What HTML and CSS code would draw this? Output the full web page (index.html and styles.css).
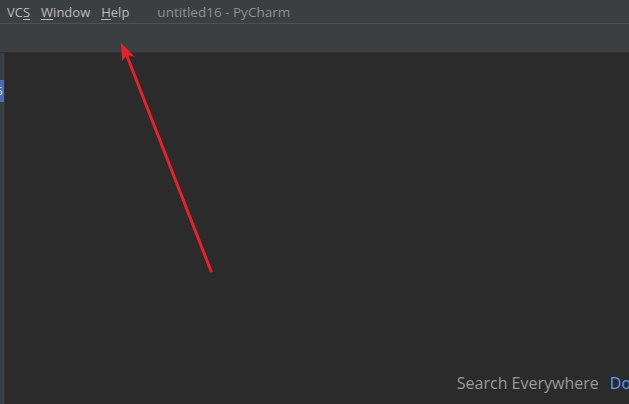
FILE: index.html
```html
<!DOCTYPE html>
<html>
<head>
<meta charset="utf-8">
<link rel="stylesheet" href="styles.css">
</head>
<body>
<div class="menubar">
  <span class="menu">VC<u>S</u></span>
  <span class="menu"><u>W</u>indow</span>
  <span class="menu"><u>H</u>elp</span>
  <span class="title">untitled16 - PyCharm</span>
</div>
<div class="toolbar"></div>
<div class="main">
  <div class="strip"><div class="tab">5</div></div>
  <div class="editor">
    <div class="hint"><span class="hint-label">Search Everywhere</span><span class="hint-key">Do</span></div>
  </div>
</div>
<svg class="arrow" width="629" height="404" viewBox="0 0 629 404">
  <path d="M211 271 L127 56" stroke="#e8202a" stroke-width="3" stroke-linecap="round" fill="none"/>
  <path d="M121 43 L135 57 L127 55 L122 61 Z" fill="#e8202a"/>
</svg>
</body>
</html>
```
FILE: styles.css
```css
html, body {
  margin: 0;
  padding: 0;
  width: 629px;
  height: 404px;
  overflow: hidden;
  background: #2b2b2b;
  font-family: "Open Sans", "Noto Sans", sans-serif;
}
.menubar {
  height: 23px;
  background: #3c3f41;
  display: flex;
  align-items: center;
  padding-left: 7px;
  border-bottom: 1px solid #4e5052;
  box-sizing: content-box;
}
.menu {
  color: #bbbbbb;
  font-size: 13px;
  margin-right: 11px;
}
.menu u {
  text-decoration-thickness: 1px;
  text-underline-offset: 2px;
}
.title {
  color: #8f8f8f;
  font-size: 13.5px;
  margin-left: 17px;
}
.toolbar {
  height: 28px;
  background: #3c3f41;
  border-bottom: 1px solid #323232;
}
.main {
  display: flex;
  height: 351px;
}
.strip {
  width: 4px;
  background: #3c3f41;
  border-right: 1px solid #323232;
  padding-top: 27px;
}
.tab {
  height: 22px;
  background: #4b6eaf;
  color: #dfe6f0;
  font-size: 10px;
  overflow: hidden;
  line-height: 22px;
  text-indent: -3px;
}
.editor {
  flex: 1;
  background: #2b2b2b;
  display: flex;
  justify-content: flex-end;
  align-items: flex-end;
}
.hint {
  margin-bottom: 10px;
  font-size: 16px;
  white-space: nowrap;
  margin-right: -2px;
}
.hint-label {
  color: #9a9a9a;
  margin-right: 11px;
}
.hint-key {
  color: #589df6;
}
.arrow {
  position: absolute;
  left: 0;
  top: 0;
  pointer-events: none;
}
```
